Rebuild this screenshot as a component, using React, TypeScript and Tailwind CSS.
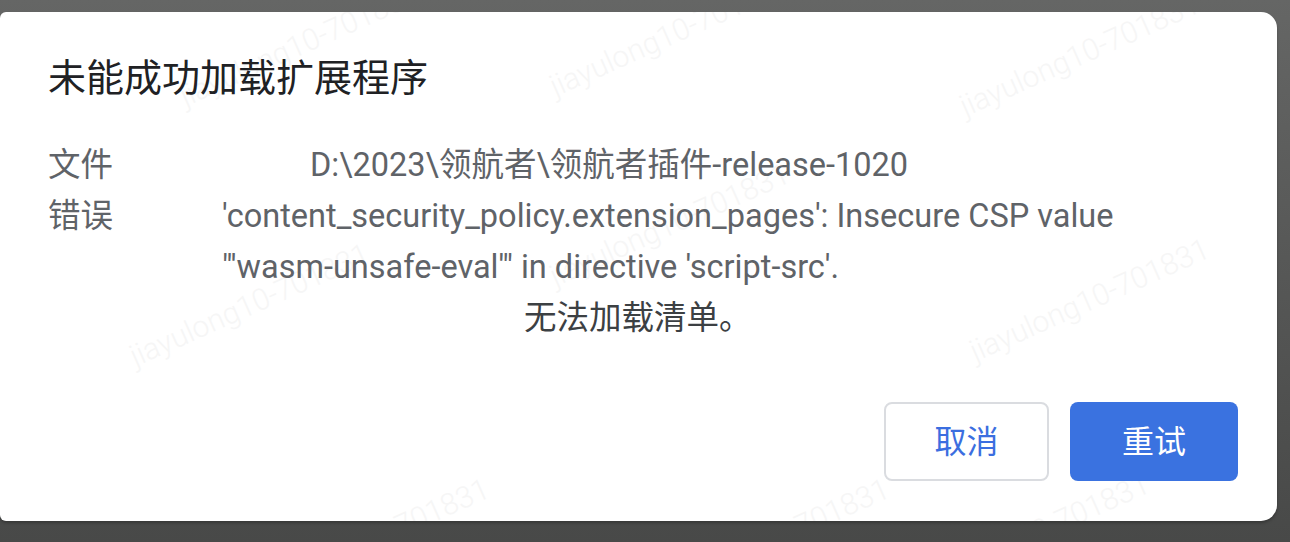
import React from 'react'

const marks = [
  { x: 170, y: 10 },
  { x: 540, y: 0 },
  { x: 950, y: 20 },
  { x: 120, y: 270 },
  { x: 540, y: 190 },
  { x: 960, y: 265 },
  { x: 240, y: 505 },
  { x: 640, y: 505 },
  { x: 900, y: 500 },
]

export default function App() {
  return (
    <div
      className="w-[1290px] h-[542px] overflow-hidden bg-gradient-to-b from-[#656665] to-[#484948] pt-[12px]"
      style={{ fontFamily: 'Roboto, "Noto Sans CJK SC", sans-serif' }}
    >
      <div className="relative w-[1277px] h-[509px] bg-white rounded-tl-[6px] rounded-bl-[6px] rounded-r-[16px] shadow-[0_2px_3px_rgba(0,0,0,0.25)] px-[48px] pt-[44px] flex flex-col overflow-hidden">
        {/* faint watermark */}
        {marks.map((m, i) => (
          <div
            key={i}
            aria-hidden="true"
            className="absolute text-[30px] font-light text-[#f6f6f6] -rotate-[24deg] whitespace-nowrap select-none pointer-events-none"
            style={{ left: m.x, top: m.y }}
          >
            jiayulong10-701831
          </div>
        ))}

        <h1 className="relative text-[38px] leading-[44px] text-[#202124] font-normal">未能成功加载扩展程序</h1>

        <div className="relative mt-[40px] text-[32.5px] leading-[51px] text-[#5f6368]">
          <div className="flex">
            <div className="w-[174px] shrink-0">文件</div>
            <div className="pl-[88px]">D:\2023\领航者\领航者插件-release-1020</div>
          </div>
          <div className="flex">
            <div className="w-[174px] shrink-0">错误</div>
            <div className="w-[960px]">
              <div>'content_security_policy.extension_pages': Insecure CSP value</div>
              <div>"'wasm-unsafe-eval'" in directive 'script-src'.</div>
            </div>
          </div>
          <div className="pl-[476px] text-[#3c4043]">无法加载清单。</div>
        </div>

        <div className="relative mt-auto mb-[40px] mr-[-9px] flex justify-end gap-[21px]">
          <button className="w-[165px] h-[79px] rounded-[8px] border-2 border-[#dadce0] bg-white text-[32px] text-[#3b6ee0]">
            取消
          </button>
          <button className="w-[168px] h-[79px] rounded-[8px] bg-[#3a72e0] text-[32px] text-white">
            重试
          </button>
        </div>
      </div>
    </div>
  )
}
